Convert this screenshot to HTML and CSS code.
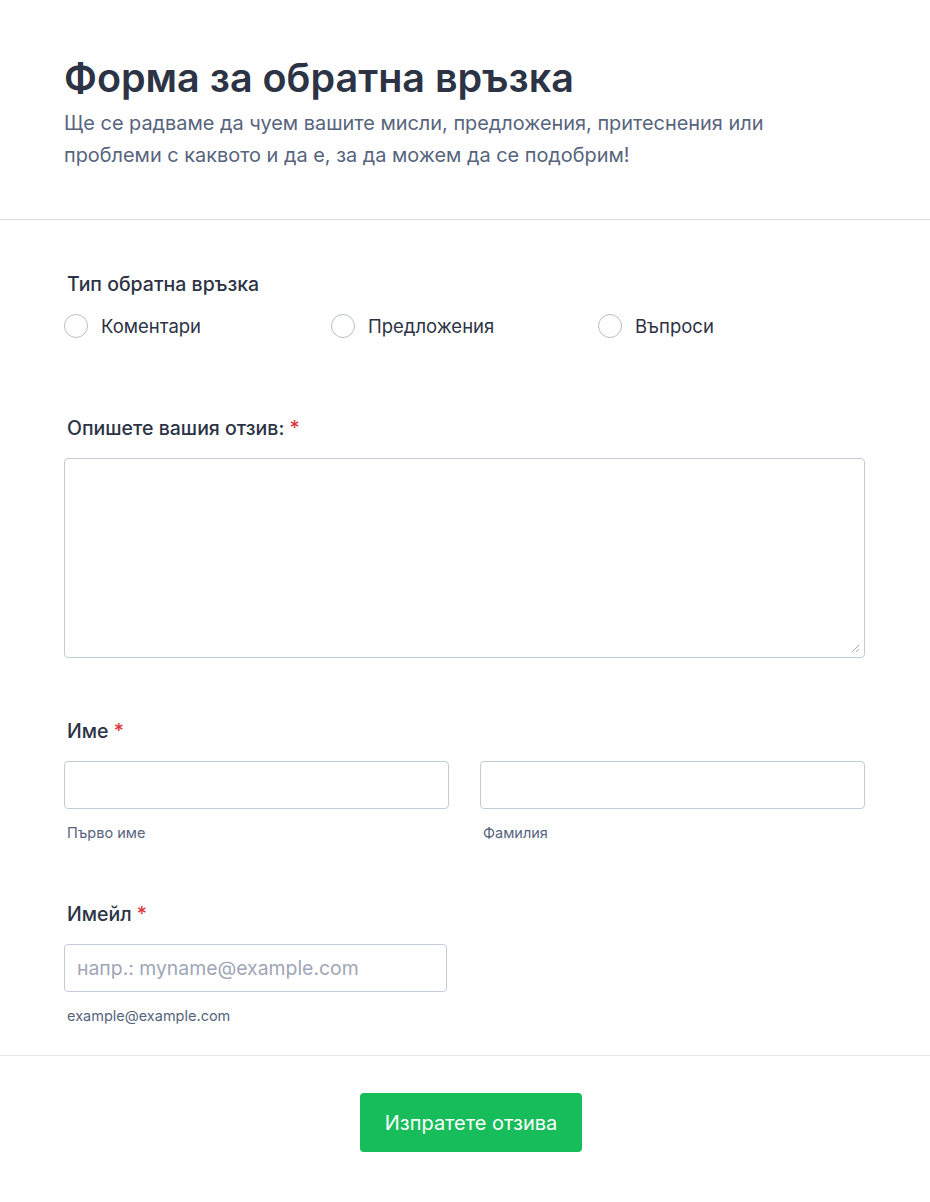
FILE: index.html
```html
<!DOCTYPE html>
<html lang="bg">
<head>
<meta charset="utf-8">
<title>Форма за обратна връзка</title>
<link rel="stylesheet" href="styles.css">
</head>
<body>
<div class="page">
  <header class="header">
    <h1 class="title">Форма за обратна връзка</h1>
    <p class="subtitle">Ще се радваме да чуем вашите мисли, предложения, притеснения или проблеми с каквото и да е, за да можем да се подобрим!</p>
  </header>
  <main class="form">
    <section class="field field-type">
      <div class="label">Тип обратна връзка</div>
      <div class="radios">
        <label class="radio"><span class="circle"></span>Коментари</label>
        <label class="radio"><span class="circle"></span>Предложения</label>
        <label class="radio"><span class="circle"></span>Въпроси</label>
      </div>
    </section>
    <section class="field field-desc">
      <div class="label">Опишете вашия отзив: <span class="req">*</span></div>
      <div class="textarea"><svg class="grip" width="9" height="9" viewBox="0 0 9 9"><path d="M1 8 L8 1 M5 8 L8 5" stroke="#a9adbf" stroke-width="1"/></svg></div>
    </section>
    <section class="field field-name">
      <div class="label">Име <span class="req">*</span></div>
      <div class="name-row">
        <div class="name-col">
          <div class="input"></div>
          <div class="sub">Първо име</div>
        </div>
        <div class="name-col">
          <div class="input"></div>
          <div class="sub">Фамилия</div>
        </div>
      </div>
    </section>
    <section class="field field-email">
      <div class="label">Имейл <span class="req">*</span></div>
      <div class="input email"><span class="placeholder">напр.: myname@example.com</span></div>
      <div class="sub">example@example.com</div>
    </section>
  </main>
  <footer class="footer">
    <button class="submit" type="button">Изпратете отзива</button>
  </footer>
</div>
</body>
</html>
```
FILE: styles.css
```css
* { box-sizing: border-box; }
html, body { margin: 0; padding: 0; background: #fff; }
body {
  font-family: Inter, "Noto Sans", sans-serif;
  color: #2c3345;
}
.page { width: 930px; }
.header {
  padding: 54px 64px 0 64px;
  height: 220px;
  border-bottom: 1px solid #dadde6;
}
.title {
  margin: 0;
  font-size: 39.5px;
  line-height: 48px;
  font-weight: 600;
  color: #2c3345;
}
.subtitle {
  margin: 5px 0 0 0;
  width: 730px;
  font-size: 19.9px;
  line-height: 32px;
  color: #57647e;
}
.form { padding: 50px 64px 0 64px; border-bottom: 1px solid #e8e9ef; }
.label {
  font-size: 19.5px;
  line-height: 28px;
  color: #2c3345;
  padding-left: 3px;
  font-weight: 500;
}
.req { color: #e0323e; }
.field-type { height: 138px; }
.radios { display: flex; margin-top: 14px; }
.radio {
  width: 267px;
  display: flex;
  align-items: center;
  font-size: 18.5px;
  line-height: 28px;
  color: #2c3345;
}
.circle {
  width: 24px; height: 24px;
  border: 1px solid #b8bdc9;
  border-radius: 50%;
  margin-right: 13px;
  flex: none;
}
.field-desc { margin-top: 6px; height: 303px; }
.textarea {
  margin-top: 16px;
  width: 801px;
  height: 200px;
  border: 1px solid #c3cad8;
  border-radius: 4px;
  position: relative;
}
.grip { position: absolute; right: 4px; bottom: 4px; }
.field-name { height: 183px; }
.name-row { display: flex; gap: 31px; margin-top: 16px; }
.name-col { width: 385px; }
.input {
  height: 48px;
  border: 1px solid #c3cad8;
  border-radius: 4px;
}
.sub {
  font-size: 14.5px;
  line-height: 20px;
  color: #57647e;
  margin-top: 14px;
  padding-left: 3px;
}
.field-email { padding-bottom: 29px; }
.field-email .input { margin-top: 16px; }
.email {
  width: 383px;
  display: flex;
  align-items: center;
  padding-left: 12px;
}
.placeholder { font-size: 19.4px; color: #a0a6b7; }
.footer {
  display: flex;
  justify-content: center;
  padding-top: 37px;
  padding-bottom: 50px;
  padding-left: 12px;
}
.submit {
  width: 222px;
  height: 59px;
  background: #18bd5b;
  color: #fff;
  border: none;
  border-radius: 4px;
  font-family: Inter, "Noto Sans", sans-serif;
  font-size: 20px;
  font-weight: 400;
}
```
